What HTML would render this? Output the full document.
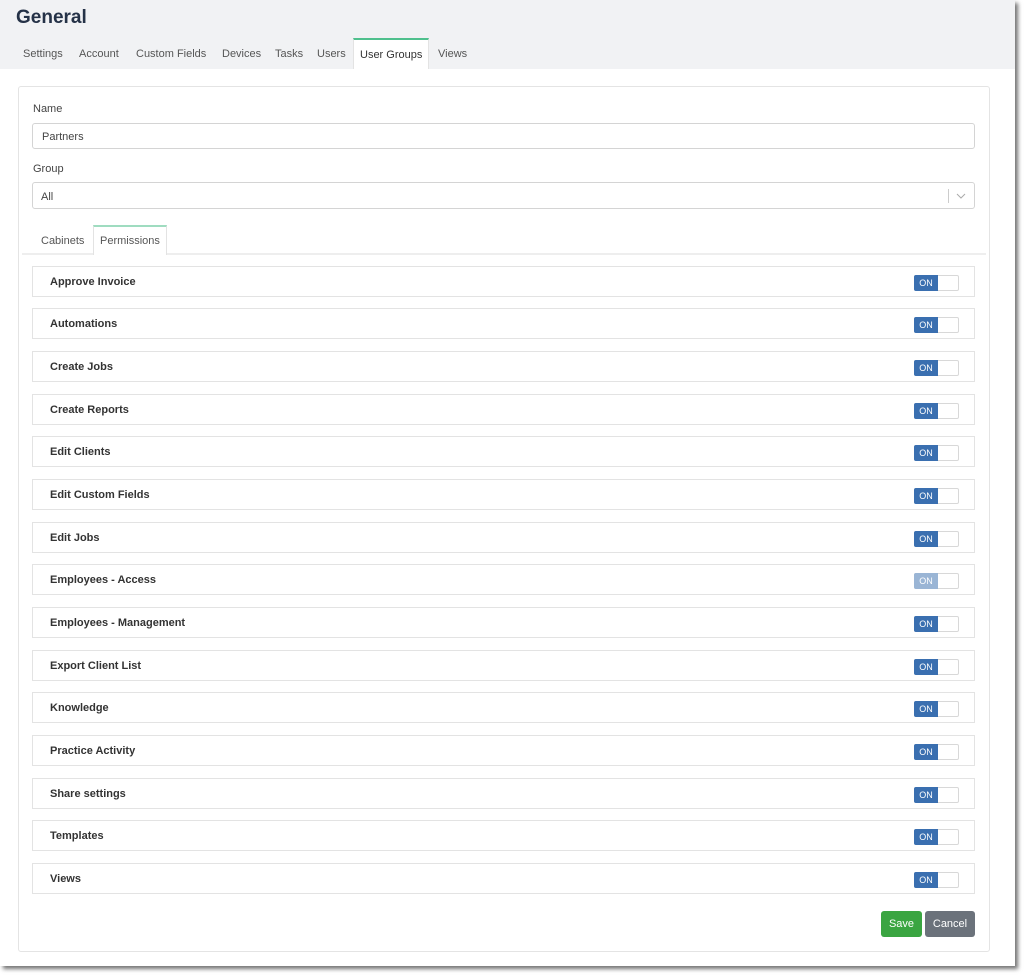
<!DOCTYPE html>
<html><head><style>
body{margin:0;width:1025px;height:976px;background:#fff;font-family:"Liberation Sans",sans-serif;position:relative;overflow:hidden}
#page{position:absolute;left:0;top:0;width:1015px;height:966px;background:#fff;box-shadow:3px 3px 4px rgba(0,0,0,.55)}
#hdr{position:absolute;left:0;top:0;width:1015px;height:69px;background:#f1f2f4}
h1{position:absolute;left:16px;top:7px;margin:0;font-size:19px;font-weight:bold;color:#253247}
.tab{position:absolute;top:48px;font-size:11px;color:#555}
#ug{position:absolute;left:353px;top:38px;width:76px;height:31px;background:#fff;border-top:2px solid #4fc08d;box-sizing:border-box;border-left:1px solid #e3e3e3;border-right:1px solid #e3e3e3}
#card{position:absolute;left:18px;top:86px;width:972px;height:866px;border:1px solid #e4e4e4;border-radius:3px;box-sizing:border-box}
.lbl{position:absolute;left:33px;font-size:11px;color:#444}
.inp{position:absolute;left:32px;width:943px;border:1px solid #d4d4d4;border-radius:3px;box-sizing:border-box;font-size:11px;color:#444}
.row{position:absolute;left:32px;width:943px;height:31px;border:1px solid #e3e3e3;box-sizing:border-box}
.row span{position:absolute;left:17px;top:9px;font-size:11px;font-weight:bold;color:#333}
.tg{position:absolute;left:881px;top:8px;width:45px;height:16px;border:1px solid #d8d8d8;border-radius:2px;box-sizing:border-box;background:#fff}
.tg i{position:absolute;left:-1px;top:-1px;width:24px;height:16px;background:#3a6fb0;color:#fff;font-style:normal;font-size:9px;line-height:16px;text-align:center;border-radius:2px 0 0 2px}
.tg.dis i{background:#9ab5d5}
.btn{position:absolute;top:911px;height:26px;border-radius:3px;color:#fff;font-size:11px;line-height:26px;text-align:center}
</style></head><body>
<div id="page">
<div id="hdr"></div>
<h1>General</h1>
<div id="ug"></div>
<div class="tab" style="left:23px">Settings</div>
<div class="tab" style="left:79px">Account</div>
<div class="tab" style="left:136px">Custom Fields</div>
<div class="tab" style="left:222px">Devices</div>
<div class="tab" style="left:275px">Tasks</div>
<div class="tab" style="left:317px">Users</div>
<div class="tab" style="left:360px;top:49px;color:#333">User Groups</div>
<div class="tab" style="left:438px">Views</div>
<div id="card"></div>
<div class="lbl" style="top:103px">Name</div>
<div class="inp" style="top:123px;height:26px;padding:7px 9px">Partners</div>
<div class="lbl" style="top:163px">Group</div>
<div class="inp" style="top:182px;height:27px;padding:8px 8px">All
<div style="position:absolute;left:915px;top:6px;width:1px;height:14px;background:#ccc"></div>
<svg style="position:absolute;left:923px;top:9px" width="10" height="8"><path d="M1 2 L5 6 L9 2" stroke="#aaa" fill="none"/></svg></div>
<div style="position:absolute;left:22px;top:253px;width:964px;height:2px;background:#eee"></div>
<div style="position:absolute;left:93px;top:225px;width:74px;height:30px;background:#fff;border:1px solid #e3e3e3;border-top:2px solid #9fdcc0;border-bottom:none;box-sizing:border-box"></div>
<div class="lbl" style="left:41px;top:235px;color:#555">Cabinets</div>
<div class="lbl" style="left:100px;top:235px;color:#555">Permissions</div>

<div class="row" style="top:266px"><span>Approve Invoice</span><div class="tg"><i>ON</i></div></div>
<div class="row" style="top:308px"><span>Automations</span><div class="tg"><i>ON</i></div></div>
<div class="row" style="top:351px"><span>Create Jobs</span><div class="tg"><i>ON</i></div></div>
<div class="row" style="top:394px"><span>Create Reports</span><div class="tg"><i>ON</i></div></div>
<div class="row" style="top:436px"><span>Edit Clients</span><div class="tg"><i>ON</i></div></div>
<div class="row" style="top:479px"><span>Edit Custom Fields</span><div class="tg"><i>ON</i></div></div>
<div class="row" style="top:522px"><span>Edit Jobs</span><div class="tg"><i>ON</i></div></div>
<div class="row" style="top:564px"><span>Employees - Access</span><div class="tg dis"><i>ON</i></div></div>
<div class="row" style="top:607px"><span>Employees - Management</span><div class="tg"><i>ON</i></div></div>
<div class="row" style="top:650px"><span>Export Client List</span><div class="tg"><i>ON</i></div></div>
<div class="row" style="top:692px"><span>Knowledge</span><div class="tg"><i>ON</i></div></div>
<div class="row" style="top:735px"><span>Practice Activity</span><div class="tg"><i>ON</i></div></div>
<div class="row" style="top:778px"><span>Share settings</span><div class="tg"><i>ON</i></div></div>
<div class="row" style="top:820px"><span>Templates</span><div class="tg"><i>ON</i></div></div>
<div class="row" style="top:863px"><span>Views</span><div class="tg"><i>ON</i></div></div>

<div class="btn" style="left:881px;width:41px;background:#3aa541">Save</div>
<div class="btn" style="left:925px;width:50px;background:#6b727b">Cancel</div>
</div>
</body></html>
